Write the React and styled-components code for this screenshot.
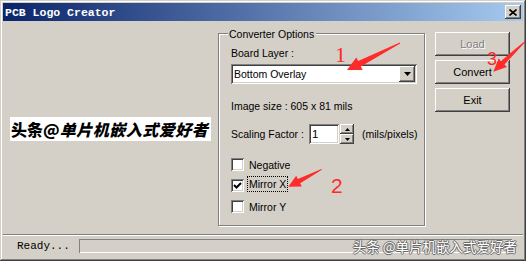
import React from "react"
import styled, {createGlobalStyle, css} from "styled-components"

const face = "#d4d0c8"
const raised = css`
  box-shadow: inset -1px -1px #404040, inset 1px 1px #fff, inset -2px -2px #808080,
    inset 2px 2px ${face};
`
const sunken = css`
  box-shadow: inset 1px 1px #808080, inset -1px -1px #fff, inset 2px 2px #404040,
    inset -2px -2px ${face};
`

const GlobalStyle = createGlobalStyle`
  html, body { margin: 0; padding: 0; background: ${face}; }
  body {
    font-family: "Liberation Sans", Arial, sans-serif;
    font-size: 10.5px;
    color: #000;
  }
`

const SWindow = styled.div`
  position: relative;
  width: 526px;
  height: 261px;
  box-sizing: border-box;
  padding: 3px;
  display: flex;
  flex-direction: column;
  background: ${face};
  box-shadow: inset -1px -1px #404040, inset 1px 1px ${face}, inset -2px -2px #808080,
    inset 2px 2px #fff;
  overflow: hidden;
`

const STitleBar = styled.div`
  height: 18px;
  flex-shrink: 0;
  display: flex;
  align-items: center;
  justify-content: space-between;
  padding: 0 2px;
  background: linear-gradient(to right, #0a246a, #a6caf0);
`

const STitle = styled.div`
  color: #fff;
  font-family: "Liberation Mono", monospace;
  font-weight: bold;
  font-size: 11.5px;
  white-space: nowrap;
`

const SCloseButton = styled.div`
  width: 16px;
  height: 14px;
  display: flex;
  align-items: center;
  justify-content: center;
  background: ${face};
  ${raised}
`

const SBody = styled.div`
  flex: 1;
  display: flex;
  min-height: 0;
`

const SLeftPane = styled.div`
  width: 215px;
  flex-shrink: 0;
  box-sizing: border-box;
  padding: 96px 0 0 7px;
`

const SLogo = styled.div`
  width: 201px;
  height: 24px;
  box-sizing: border-box;
  padding-left: 1px;
  display: flex;
  align-items: center;
  background: #fff;
  font-family: "Noto Sans CJK SC", sans-serif;
  font-size: 16px;
  font-weight: 900;
  white-space: nowrap;
  overflow: hidden;
  & i {
    font-style: italic;
    letter-spacing: 0.5px;
  }
`

const SGroupBox = styled.div`
  position: relative;
  box-sizing: border-box;
  width: 207px;
  height: 193px;
  margin-top: 12px;
  padding: 13px 0 0 12px;
  border: 1px solid #808080;
  box-shadow: inset 1px 1px #fff, 1px 1px #fff;
`

const SCaption = styled.div`
  position: absolute;
  top: -6px;
  left: 9px;
  padding: 0 2px 0 1px;
  line-height: 13px;
  background: ${face};
`

const SLabel = styled.div`
  height: 13px;
  line-height: 13px;
  margin-top: ${p => p.$gap || 0}px;
  white-space: nowrap;
`

const SSelect = styled.div`
  width: 186px;
  height: 20px;
  margin-top: 4px;
  box-sizing: border-box;
  padding: 2px;
  display: flex;
  align-items: center;
  background: #fff;
  ${sunken}
`

const SSelectText = styled.div`
  flex: 1;
  padding-left: 1px;
`

const SDropButton = styled.div`
  width: 16px;
  height: 16px;
  display: flex;
  align-items: center;
  justify-content: center;
  background: ${face};
  ${raised}
`

const SScaleRow = styled.div`
  display: flex;
  align-items: center;
  height: 20px;
  margin-top: 11px;
`

const SScaleLabel = styled.div`
  width: 78px;
  white-space: nowrap;
`

const SNumberInput = styled.div`
  width: 30px;
  height: 20px;
  box-sizing: border-box;
  padding: 2px 0 0 3px;
  line-height: 16px;
  font-size: 11.5px;
  background: #fff;
  ${sunken}
`

const SSpinner = styled.div`
  width: 14px;
  height: 20px;
  margin-left: 1px;
  display: flex;
  flex-direction: column;
`

const SSpinButton = styled.div`
  flex: 1;
  display: flex;
  align-items: center;
  justify-content: center;
  background: ${face};
  ${raised}
`

const SUnits = styled.div`
  margin-left: 8px;
  white-space: nowrap;
`

const SCheckList = styled.div`
  margin-top: 14px;
  display: flex;
  flex-direction: column;
  gap: 8px;
`

const SCheckRow = styled.div`
  display: flex;
  align-items: center;
  height: 13px;
`

const SCheckBox = styled.div`
  width: 13px;
  height: 13px;
  display: flex;
  align-items: center;
  justify-content: center;
  background: #fff;
  ${sunken}
`

const SCheckLabel = styled.div`
  margin-left: 4px;
  padding: 0 1px;
  line-height: 14px;
  margin-top: -3px;
  outline: ${p => (p.$focused ? "1px dotted #000" : "none")};
  ${p => !p.$focused && "margin-top: 0;"}
`

const SButtonColumn = styled.div`
  width: 75px;
  margin: 11px 0 0 10px;
  display: flex;
  flex-direction: column;
  gap: 4px;
`

const SButton = styled.button`
  height: 24px;
  box-sizing: border-box;
  border: none;
  padding: 0;
  background: ${face};
  font-family: inherit;
  font-size: 11px;
  color: ${p => (p.disabled ? "#808080" : "#000")};
  text-shadow: ${p => (p.disabled ? "1px 1px #fff" : "none")};
  ${raised}
`

const SStatusBar = styled.div`
  height: 24px;
  flex-shrink: 0;
  box-sizing: border-box;
  padding-top: 4px;
  display: flex;
  align-items: flex-start;
  border-top: 1px solid #808080;
  box-shadow: inset 0 1px #fff;
`

const SReady = styled.div`
  width: 76px;
  box-sizing: border-box;
  padding-left: 14px;
  line-height: 14px;
  font-family: "Liberation Mono", monospace;
  font-size: 11px;
`

const SStatusPanel = styled.div`
  flex: 1;
  height: 14px;
  margin-right: 11px;
  box-shadow: inset 1px 1px #808080, inset -1px -1px #fff;
`

const SWatermark = styled.div`
  position: absolute;
  right: 9px;
  top: 236px;
  font-family: "Noto Sans CJK SC", sans-serif;
  font-size: 13.5px;
  color: #fff;
  white-space: nowrap;
  text-shadow: -1px 0 #6a6a6a, 1px 0 #6a6a6a, 0 -1px #6a6a6a, 0 1px #6a6a6a;
`

const SArrows = styled.svg`
  position: absolute;
  left: 0;
  top: 0;
  pointer-events: none;
`

const SMark = styled.div`
  position: absolute;
  left: ${p => p.$x}px;
  top: ${p => p.$y}px;
  font-family: ${p => (p.$serif ? '"Liberation Serif", serif' : '"Liberation Sans", sans-serif')};
  font-size: ${p => p.$size}px;
  line-height: 1;
  color: #ff2a2a;
`

const Tri = ({up}) => (
  <svg width="7" height="4" viewBox="0 0 7 4">
    <polygon points={up ? "3.5,0 7,4 0,4" : "0,0 7,0 3.5,4"} fill="#000" />
  </svg>
)

const SmallTri = ({up}) => (
  <svg width="5" height="3" viewBox="0 0 5 3">
    <polygon points={up ? "2.5,0 5,3 0,3" : "0,0 5,0 2.5,3"} fill="#000" />
  </svg>
)

const Check = ({checked, label, focused}) => (
  <SCheckRow>
    <SCheckBox>
      {checked && (
        <svg width="9" height="9" viewBox="0 0 9 9">
          <polyline points="1,4 3.5,6.5 8,2" fill="none" stroke="#000" strokeWidth="2" />
        </svg>
      )}
    </SCheckBox>
    <SCheckLabel $focused={focused}>{label}</SCheckLabel>
  </SCheckRow>
)

const App = () => (
  <>
    <GlobalStyle />
    <SWindow>
      <STitleBar>
        <STitle>PCB Logo Creator</STitle>
        <SCloseButton>
          <svg width="8" height="7" viewBox="0 0 8 7">
            <path d="M0.5 0.5 L7.5 6.5 M7.5 0.5 L0.5 6.5" stroke="#000" strokeWidth="1.6" />
          </svg>
        </SCloseButton>
      </STitleBar>

      <SBody>
        <SLeftPane>
          <SLogo>
            头条@<i>单片机嵌入式爱好者</i>
          </SLogo>
        </SLeftPane>

        <SGroupBox>
          <SCaption>Converter Options</SCaption>
          <SLabel>Board Layer :</SLabel>
          <SSelect>
            <SSelectText>Bottom Overlay</SSelectText>
            <SDropButton>
              <Tri />
            </SDropButton>
          </SSelect>
          <SLabel $gap={16}>Image size : 605 x 81 mils</SLabel>
          <SScaleRow>
            <SScaleLabel>Scaling Factor :</SScaleLabel>
            <SNumberInput>1</SNumberInput>
            <SSpinner>
              <SSpinButton>
                <SmallTri up />
              </SSpinButton>
              <SSpinButton>
                <SmallTri />
              </SSpinButton>
            </SSpinner>
            <SUnits>(mils/pixels)</SUnits>
          </SScaleRow>
          <SCheckList>
            <Check label="Negative" />
            <Check label="Mirror X" checked focused />
            <Check label="Mirror Y" />
          </SCheckList>
        </SGroupBox>

        <SButtonColumn>
          <SButton disabled>Load</SButton>
          <SButton>Convert</SButton>
          <SButton>Exit</SButton>
        </SButtonColumn>
      </SBody>

      <SStatusBar>
        <SReady>Ready...</SReady>
        <SStatusPanel />
      </SStatusBar>

      <SWatermark>头条 @单片机嵌入式爱好者</SWatermark>

      <SArrows width="526" height="261" viewBox="0 0 526 261">
        <g fill="#ff2a2a">
          <polygon points="347,70 356.3,57.5 358.2,61 399.8,42.6 400.2,43.4 360.9,66.4 362.6,69.9" />
          <polygon points="288.3,186.7 296.2,175.8 297.8,178.9 321.5,168.9 321.9,169.7 300.2,183.3 301.8,186.4" />
          <polygon points="493.3,71.7 498.6,58.4 501,60.9 524.7,41.3 525.3,42 504.5,64.6 506.9,67.1" />
        </g>
      </SArrows>
      <SMark $x={335} $y={44} $size={22} $serif>1</SMark>
      <SMark $x={331} $y={175} $size={21}>2</SMark>
      <SMark $x={487} $y={50} $size={18}>3</SMark>
    </SWindow>
  </>
)

export default App
